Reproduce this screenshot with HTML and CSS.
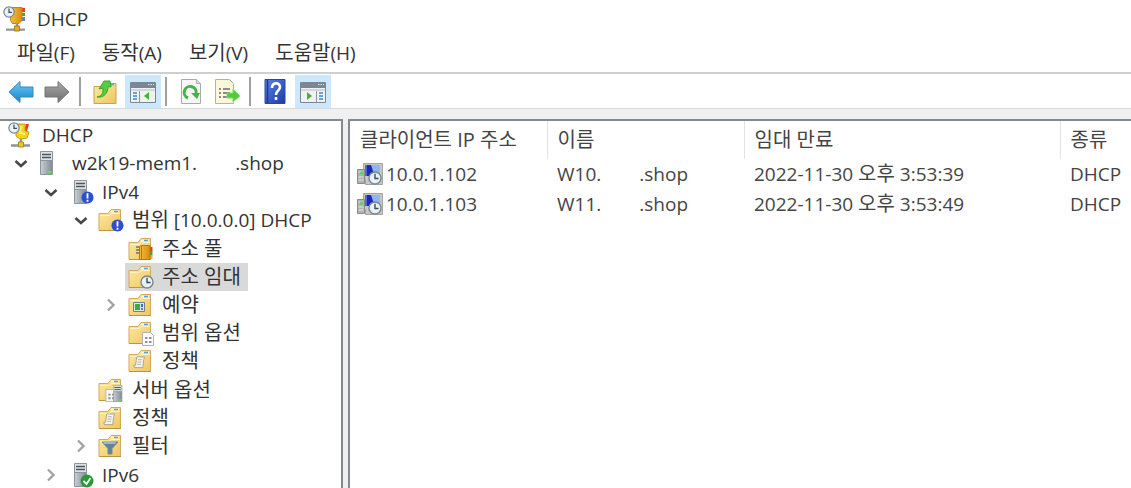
FILE: index.html
```html
<!DOCTYPE html>
<html lang="ko">
<head>
<meta charset="utf-8">
<title>DHCP</title>
<link rel="stylesheet" href="styles.css">
</head>
<body>
<svg class="defs" aria-hidden="true">
  <defs>
    <linearGradient id="gold" x1="0" y1="0" x2="1" y2="1"><stop offset="0" stop-color="#fdeba6"/><stop offset="1" stop-color="#efc560"/></linearGradient>
    <linearGradient id="amber" x1="0" y1="0" x2="1" y2="0"><stop offset="0" stop-color="#f8bc3c"/><stop offset="1" stop-color="#d98d12"/></linearGradient>
    <linearGradient id="steel" x1="0" y1="0" x2="1" y2="0"><stop offset="0" stop-color="#c9d0d6"/><stop offset="1" stop-color="#7f8a93"/></linearGradient>
    <linearGradient id="blue" x1="0" y1="0" x2="0" y2="1"><stop offset="0" stop-color="#6cc8f4"/><stop offset="1" stop-color="#1583cf"/></linearGradient>
    <linearGradient id="gray" x1="0" y1="0" x2="0" y2="1"><stop offset="0" stop-color="#aaa"/><stop offset="1" stop-color="#6c6c6c"/></linearGradient>
    <linearGradient id="navy" x1="0" y1="0" x2="1" y2="1"><stop offset="0" stop-color="#5b83e6"/><stop offset="1" stop-color="#1a3aa6"/></linearGradient>
    <symbol id="folder" viewBox="0 0 26 26">
      <path d="M1 6.500h9l3-4h9.500v21H1z" fill="url(#gold)" stroke="#d3ab58"/>
      <path d="M13 4.500h8" stroke="#fff6d4" stroke-width="2"/><path d="M16 4.500h4" stroke="#5aa0d8" stroke-width="1.500"/>
      <path d="M2 8.500h9l2.500-2H22" fill="none" stroke="#fff3c4"/><path d="M1 23.500h22" stroke="#bd9443"/>
    </symbol>
    <symbol id="clock" viewBox="0 0 14 14"><circle cx="7" cy="7" r="6" fill="#e8f2f5" stroke="#788890" stroke-width="1.400"/><path d="M7 2.800V7.500h3.500" fill="none" stroke="#3f4a55" stroke-width="1.400"/></symbol>
    <symbol id="info" viewBox="0 0 14 14"><circle cx="7" cy="7" r="6.500" fill="#2c4fcf"/><path d="M7 2.500v5.500M7 9.500v2" stroke="#fff" stroke-width="2"/></symbol>
    <symbol id="server" viewBox="0 0 14 24"><path d="M.5 .5h12v23H.5z" fill="url(#steel)" stroke="#8d959c"/><path d="M1 1h11v8H1z" fill="#dde2e6"/><path d="M2 3.500h9M2 6.500h9" stroke="#4d565d" stroke-width="1.400"/><path d="M1 9.500h11" stroke="#8c959c"/><path d="M8.500 20h3v2h-3z" fill="#5cf02c"/></symbol>
    <symbol id="book" viewBox="0 0 14 16"><path d="M11 2h2.500v4H11z" fill="#d8432c"/><path d="M11 6h2.500v4H11z" fill="#45a845"/><path d="M11 10h2.500v4H11z" fill="#e8b23a"/><path d="M.5 1.500l2-1H11v14H.5z" fill="url(#amber)" stroke="#b8770f"/><path d="M2.500 1v13" stroke="#b8770f"/></symbol>
    <symbol id="form" viewBox="0 0 12 14"><path d="M.5 .5h8l3 3v10H.5z" fill="#fafafa" stroke="#b0b4b8"/><path d="M3 5h2.500v2H3zM7 5h2.500v2H7zM3 9h2.500v2H3zM7 9h2.500v2H7z" fill="#8a929a"/></symbol>
    <symbol id="scroll" viewBox="0 0 14 14"><path d="M4 1h8.500l-1 3-1 8.500H1.500l-.8-2.500h2z" fill="#f3f3ea" stroke="#a3a494"/><path d="M5.500 4h4M5 6.500h4M4.500 9h4" stroke="#b0b0a4"/></symbol>
    <symbol id="dhcp" viewBox="0 0 24 26">
      <path d="M19 2h3v4h-3z" fill="#e33d2c"/><path d="M19 7h3v3h-3z" fill="#42a44b"/><path d="M19 11h3v4h-3z" fill="#4c8ad0"/>
      <path d="M8 1.500h11v13l-3 3H9.500l-2-3V6z" fill="url(#amber)" stroke="#c18218"/><path d="M14 17v4M3 23.500h19" stroke="#8f9497" stroke-width="2.400"/><path d="M3 22.500h19" stroke="#c9ced0"/><path d="M11.500 20h5v5h-5z" fill="#e2ac24" stroke="#a9801d"/>
      <use href="#clock" x="0" y="0" width="12" height="12"/>
    </symbol>
    <symbol id="root" viewBox="0 0 24 26">
      <path d="M18 2h3l-2 7h-3z" fill="#ef3526"/><path d="M9 2h8v7l4 1-2 6-7 1-4-3V8z" fill="#f4d416" stroke="#c6a20e"/><path d="M13 4l-1 7 5 1" fill="none" stroke="#fff27b" stroke-width="2"/>
      <path d="M13 17v4M3 23.500h19" stroke="#8f9497" stroke-width="2.400"/><path d="M10.500 20h5v5h-5z" fill="#e8cb20" stroke="#a9901d"/><use href="#clock" x="0" y="0" width="12" height="12"/>
    </symbol>
    <symbol id="down" viewBox="0 0 20 14"><path d="M4.500 5l5.500 5 5.500-5" fill="none" stroke="#484848" stroke-width="2.600"/></symbol>
    <symbol id="right" viewBox="0 0 20 14"><path d="M7 1.500L12.500 7 7 12.500" fill="none" stroke="#a3a3a3" stroke-width="2.400"/></symbol>
    <symbol id="scope" viewBox="0 0 28 26"><use href="#folder" width="26" height="26"/><use href="#info" x="13" y="12" width="13" height="13"/></symbol>
    <symbol id="pool" viewBox="0 0 28 26"><use href="#folder" width="26" height="26"/><path d="M8 11h4M8 14h4M8 17h4" stroke="#76735f" stroke-width="1.500"/><use href="#book" x="10" y="9" width="16" height="16"/></symbol>
    <symbol id="lease" viewBox="0 0 28 26"><use href="#folder" width="26" height="26"/><use href="#clock" x="12" y="11" width="14" height="14"/></symbol>
    <symbol id="reserve" viewBox="0 0 28 26"><use href="#folder" width="26" height="26"/><path d="M5.500 10.500h11v9h-11z" fill="#dbe6ea" stroke="#74828a"/><path d="M7 12h5v6H7z" fill="#3fae38"/><path d="M13 12h2v3h-2z" fill="#3b6fb5"/><path d="M13 16h2v2h-2z" fill="#777"/></symbol>
    <symbol id="options" viewBox="0 0 28 26"><use href="#folder" width="26" height="26"/><use href="#form" x="14" y="12" width="12" height="14"/></symbol>
    <symbol id="policy" viewBox="0 0 28 26"><use href="#folder" width="26" height="26"/><use href="#scroll" x="5" y="8" width="13" height="13"/></symbol>
    <symbol id="srvoptions" viewBox="0 0 28 26"><use href="#folder" width="26" height="26"/><use href="#form" x="7" y="12" width="12" height="13"/><use href="#server" x="15" y="8" width="10" height="17"/></symbol>
    <symbol id="filter" viewBox="0 0 28 26"><use href="#folder" width="26" height="26"/><path d="M4 9h16l-6 6.500V21h-4v-5.500z" fill="#60829c" stroke="#6f8a9e"/><path d="M5.500 10h12" stroke="#b8cedc" stroke-width="1.400"/></symbol>
    <symbol id="host" viewBox="0 0 28 26"><use href="#server" x="2" y="1" width="14" height="24"/></symbol>
    <symbol id="ipv4" viewBox="0 0 28 26"><use href="#server" x="6" y="1" width="14" height="24"/><use href="#info" x="13" y="12" width="13" height="13"/></symbol>
    <symbol id="ipv6" viewBox="0 0 28 26"><use href="#server" x="6" y="1" width="14" height="24"/><circle cx="19" cy="19" r="6.500" fill="#279a35"/><path d="M15.500 19l3 3 4-6" fill="none" stroke="#fff" stroke-width="1.800"/></symbol>
    <symbol id="client" viewBox="0 0 26 24">
      <path d="M6.500 1.500h19v21h-17v-5h-2z" fill="#c9c7c2" stroke="#a5a3a0"/><path d="M8 3h15v11H8z" fill="#1a2ab8"/><path d="M14 3h9v9h-6z" fill="#8fb4f2"/><path d="M8 3h2v11H8z" fill="#5068dd"/>
      <path d="M.5 7.500h7v14h-7z" fill="#b2b2b2" stroke="#8a8a8a"/><path d="M1.500 10h2M1.500 15h5M1.500 18h5" stroke="#e6e6e6"/><path d="M3 10.500h3v2H3z" fill="#45e23a"/>
      <use href="#clock" x="11" y="9" width="14" height="14"/>
    </symbol>
  </defs>
</svg>
<div class="window">
  <header class="titlebar"><svg class="app-icon"><use href="#dhcp"/></svg><h1>DHCP</h1></header>
  <nav class="menubar">
    <button>파일<span>(F)</span></button><button>동작<span>(A)</span></button><button>보기<span>(V)</span></button><button>도움말<span>(H)</span></button>
  </nav>
  <div class="toolbar" role="toolbar">
    <button aria-label="뒤로"><svg viewBox="0 0 26 24"><path d="M1 12L12 1.500v5.500h13v10H12v5.500z" fill="url(#blue)" stroke="#3289bd"/></svg></button>
    <button aria-label="앞으로"><svg viewBox="0 0 26 24"><path d="M25 12L14 1.500v5.500H1v10h13v5.500z" fill="url(#gray)" stroke="#777"/></svg></button>
    <i class="sep"></i>
    <button aria-label="한 수준 위로"><svg viewBox="0 0 26 26"><path d="M2 7.500h9l2-3h11v20H2z" fill="url(#gold)" stroke="#cda24e"/><path d="M17 5.500h5" stroke="#5aa0d8" stroke-width="1.500"/><path d="M5 18c6-1 6-5 6-9l-4 1 5-8h6l1 6-3-.5C16 14 12 19 5 18z" fill="#53ce3d" stroke="#39a52b"/></svg></button>
    <button class="active" aria-label="콘솔 트리 표시"><svg viewBox="0 0 26 24"><path d="M.5 2.500h25v20H.5z" fill="#f0f1f2" stroke="#7c8791"/><path d="M1 3h24v5H1z" fill="#7c8791"/><path d="M18 4.500h6" stroke="#dce4ea" stroke-dasharray="1.500 1"/><path d="M1 10h24" stroke="#b9bfc4"/><path d="M9.500 11v11" stroke="#8b949b"/><path d="M3 13h4M3 16h4M3 19h4" stroke="#3787d2" stroke-width="1.500"/><path d="M19 12v8l-5-4z" fill="#42b52f"/></svg></button>
    <i class="sep"></i>
    <button aria-label="새로 고침"><svg viewBox="0 0 26 26"><path d="M3.500 .5h15l4 4v20h-19z" fill="#f6f6f6" stroke="#aaa"/><path d="M18.500 .5v4h4" fill="#ddd" stroke="#aaa"/><path d="M10 19a6 6 0 1 1 8-4" fill="none" stroke="#3db642" stroke-width="3"/><path d="M13 14h9l-3 6z" fill="#3db642"/></svg></button>
    <button aria-label="목록 내보내기"><svg viewBox="0 0 26 26"><path d="M1.500 .5h14l4 4v20h-18z" fill="#fcf7da" stroke="#b8b394"/><path d="M5 10h2M5 14h2M5 18h2M9 10h7M9 14h7M9 18h6" stroke="#666a78" stroke-width="1.500"/><path d="M13 14h6v-4l7 7-7 6v-4h-6z" fill="#58c83f" stroke="#80dc6d"/></svg></button>
    <i class="sep"></i>
    <button aria-label="도움말"><svg viewBox="0 0 26 26"><path d="M3 .5h20v24H3z" fill="url(#navy)" stroke="#2b479e"/><path d="M5.500 1v23" stroke="#1d3894" stroke-width="1.500"/><path d="M10 9c0-6 8-6 8-1 0 4-4 3-4 8M14 18v3" fill="none" stroke="#fff" stroke-width="2.600"/></svg></button>
    <button class="active" aria-label="작업 창 표시"><svg viewBox="0 0 26 24"><path d="M.5 2.500h25v20H.5z" fill="#f0f1f2" stroke="#7c8791"/><path d="M1 3h24v5H1z" fill="#7c8791"/><path d="M18 4.500h6" stroke="#dce4ea" stroke-dasharray="1.500 1"/><path d="M1 10h24" stroke="#b9bfc4"/><path d="M16.500 11v11" stroke="#8b949b"/><path d="M19 13h4M19 16h4M19 19h4" stroke="#3787d2" stroke-width="1.500"/><path d="M7 12v8l5-4z" fill="#42b52f"/></svg></button>
  </div>
  <main class="panes">
    <nav class="tree" aria-label="콘솔 트리">
      <div class="row root"><svg class="icon"><use href="#root"/></svg><span>DHCP</span></div>
      <ul class="top">
        <li><div class="row"><svg class="chev"><use href="#down"/></svg><svg class="icon"><use href="#host"/></svg><span>w2k19-mem1.<i class="blank"></i>.shop</span></div>
          <ul class="protocols">
            <li><div class="row"><svg class="chev"><use href="#down"/></svg><svg class="icon"><use href="#ipv4"/></svg><span>IPv4</span></div>
              <ul class="scopes">
                <li><div class="row"><svg class="chev"><use href="#down"/></svg><svg class="icon"><use href="#scope"/></svg><span><b>범위</b> [10.0.0.0] DHCP</span></div>
                  <ul class="nodes">
                    <li class="row"><i class="chev"></i><svg class="icon"><use href="#pool"/></svg><b>주소 풀</b></li>
                    <li class="row"><i class="chev"></i><span class="selected"><svg class="icon"><use href="#lease"/></svg><b>주소 임대</b></span></li>
                    <li class="row"><svg class="chev"><use href="#right"/></svg><svg class="icon"><use href="#reserve"/></svg><b>예약</b></li>
                    <li class="row"><i class="chev"></i><svg class="icon"><use href="#options"/></svg><b>범위 옵션</b></li>
                    <li class="row"><i class="chev"></i><svg class="icon"><use href="#policy"/></svg><b>정책</b></li>
                  </ul></li>
                <li class="row"><i class="chev"></i><svg class="icon"><use href="#srvoptions"/></svg><b>서버 옵션</b></li>
                <li class="row"><i class="chev"></i><svg class="icon"><use href="#policy"/></svg><b>정책</b></li>
                <li class="row"><svg class="chev"><use href="#right"/></svg><svg class="icon"><use href="#filter"/></svg><b>필터</b></li>
              </ul></li>
            <li class="row"><svg class="chev"><use href="#right"/></svg><svg class="icon"><use href="#ipv6"/></svg><span>IPv6</span></li>
          </ul></li>
      </ul>
    </nav>
    <section class="list">
      <table>
        <colgroup><col class="c-ip"><col class="c-name"><col class="c-date"><col></colgroup>
        <thead><tr><th>클라이언트 IP 주소</th><th>이름</th><th>임대 만료</th><th>종류</th></tr></thead>
        <tbody>
          <tr><td class="ip"><div><svg><use href="#client"/></svg>10.0.1.102</div></td><td>W10.<i class="blank"></i>.shop</td><td>2022-11-30 <b>오후</b> 3:53:39</td><td>DHCP</td></tr>
          <tr><td class="ip"><div><svg><use href="#client"/></svg>10.0.1.103</div></td><td>W11.<i class="blank"></i>.shop</td><td>2022-11-30 <b>오후</b> 3:53:49</td><td>DHCP</td></tr>
        </tbody>
      </table>
    </section>
  </main>
</div>
</body>
</html>
```
FILE: styles.css
```css
* { box-sizing: border-box; }
body {
  margin: 0;
  background: #fff;
  color: #333;
  font: 19px/28px "Open Sans", "Noto Sans CJK KR", sans-serif;
}
.defs { position: absolute; width: 0; height: 0; }
b, th, h1, i { font-weight: 400; font-style: normal; }
button { border: 0; padding: 0; background: none; color: inherit; font: inherit; }
svg { display: block; flex: none; }
.window { display: flex; flex-direction: column; height: 100vh; overflow: hidden; }

.titlebar { display: flex; align-items: center; gap: 10px; height: 37px; padding-left: 3px; }
.app-icon { width: 24px; height: 28px; }
h1 { margin: 0; font-size: 19px; }
.menubar { display: flex; gap: 27px; height: 35px; padding: 2px 0 5px 17px; font-size: 20px; }
.menubar span { font-size: 19px; }

.toolbar {
  display: flex;
  flex: none;
  align-items: center;
  height: 37px;
  padding: 1px 0 0 3px;
  border-top: 2px solid #cfcfcf;
  border-bottom: 1px solid #d8d8d8;
}
.toolbar button { display: grid; place-items: center; width: 36px; height: 33px; }
.toolbar svg { width: 26px; height: 26px; }
.toolbar .active { margin-left: 2px; background: #cce8ff; }
.sep { width: 2px; height: 29px; margin: 0 6px 0 4px; background: #a0a0a0; }

.panes { display: flex; flex: 1; gap: 5px; min-height: 0; padding-top: 10px; background: #f0f0f0; }
.tree, .list { border: 2px solid #858a92; border-bottom: 0; background: #fff; overflow: hidden; }
.tree { flex: none; width: 343px; border-left: 0; white-space: nowrap; }
.tree ul { margin: 0; padding: 0 0 0 30px; list-style: none; }
.tree .top { padding-left: 11px; }
.tree .protocols { padding-top: 1px; }
.tree .scopes { padding-bottom: 1px; }
.tree .nodes { padding-top: 1px; padding-bottom: 1px; }
.row, .selected { display: flex; align-items: center; height: 28px; }
.root { padding-left: 8px; }
.row b { font-size: 20px; }
.icon { width: 28px; height: 26px; margin-right: 6px; }
.root .icon { width: 24px; margin-right: 10px; }
.chev { flex: none; width: 20px; height: 14px; margin-right: 7px; }
.selected { margin-left: -3px; padding: 0 7px 0 3px; background: #d9d9d9; }
.blank { display: inline-block; width: 38px; }

.list { flex: 1; min-width: 0; border-right: 0; }
table { width: 100%; border-collapse: collapse; table-layout: fixed; color: #444; white-space: nowrap; }
.c-ip, .c-name { width: 197px; }
.c-date { width: 316px; }
th, td { padding: 0 0 0 10px; text-align: left; }
th { height: 38px; border-right: 1px solid #e2e2e2; font-size: 20px; }
th:last-child { border-right: 0; }
td { height: 30px; }
td b { font-size: 20px; }
.ip { padding-left: 7px; }
.ip div { display: flex; align-items: center; gap: 3px; }
.ip svg { width: 26px; height: 24px; }
```
